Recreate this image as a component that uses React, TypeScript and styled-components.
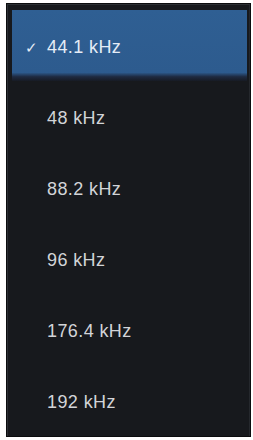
import React from "react";
import styled, { createGlobalStyle } from "styled-components";

const Global = createGlobalStyle`
  html, body { margin: 0; padding: 0; background: #ffffff; }
  body { font-family: "Liberation Sans", Arial, sans-serif; }
`;

const Page = styled.div`
  width: 253px;
  height: 440px;
  padding: 3px 2px 3px 6px;
  box-sizing: border-box;
`;

const Menu = styled.div`
  width: 245px;
  height: 434px;
  box-sizing: border-box;
  background: #17191d;
  border: 1px solid #0b0c0e;
  box-shadow: inset 1px 1px 0 #2c2f34, inset -1px 0 0 #25282d;
  padding: 6px 3px 0 5px;
  display: flex;
  flex-direction: column;
`;

const Row = styled.div<{ $selected?: boolean }>`
  height: 71px;
  flex: 0 0 71px;
  display: flex;
  align-items: center;
  padding-top: 4px;
  box-sizing: border-box;
  background: ${(p) =>
    p.$selected
      ? "linear-gradient(to bottom, #2f5f93 0%, #2d5b8e 88%, #1e2a40 94%, #171b24 100%)"
      : "transparent"};
  color: ${(p) => (p.$selected ? "#e4ecf6" : "#d2d4d8")};
  font-size: 18px;
  letter-spacing: 0.4px;
`;

const Check = styled.span`
  width: 35px;
  padding-left: 13px;
  box-sizing: border-box;
  font-size: 15px;
  color: #e4ecf6;
  flex: 0 0 35px;
`;

const Label = styled.span`
  white-space: nowrap;
`;

const rates = ["44.1 kHz", "48 kHz", "88.2 kHz", "96 kHz", "176.4 kHz", "192 kHz"];

export default function App() {
  return (
    <>
      <Global />
      <Page>
        <Menu>
          {rates.map((r, i) => (
            <Row key={r} $selected={i === 0}>
              <Check>{i === 0 ? "✓" : ""}</Check>
              <Label>{r}</Label>
            </Row>
          ))}
        </Menu>
      </Page>
    </>
  );
}
